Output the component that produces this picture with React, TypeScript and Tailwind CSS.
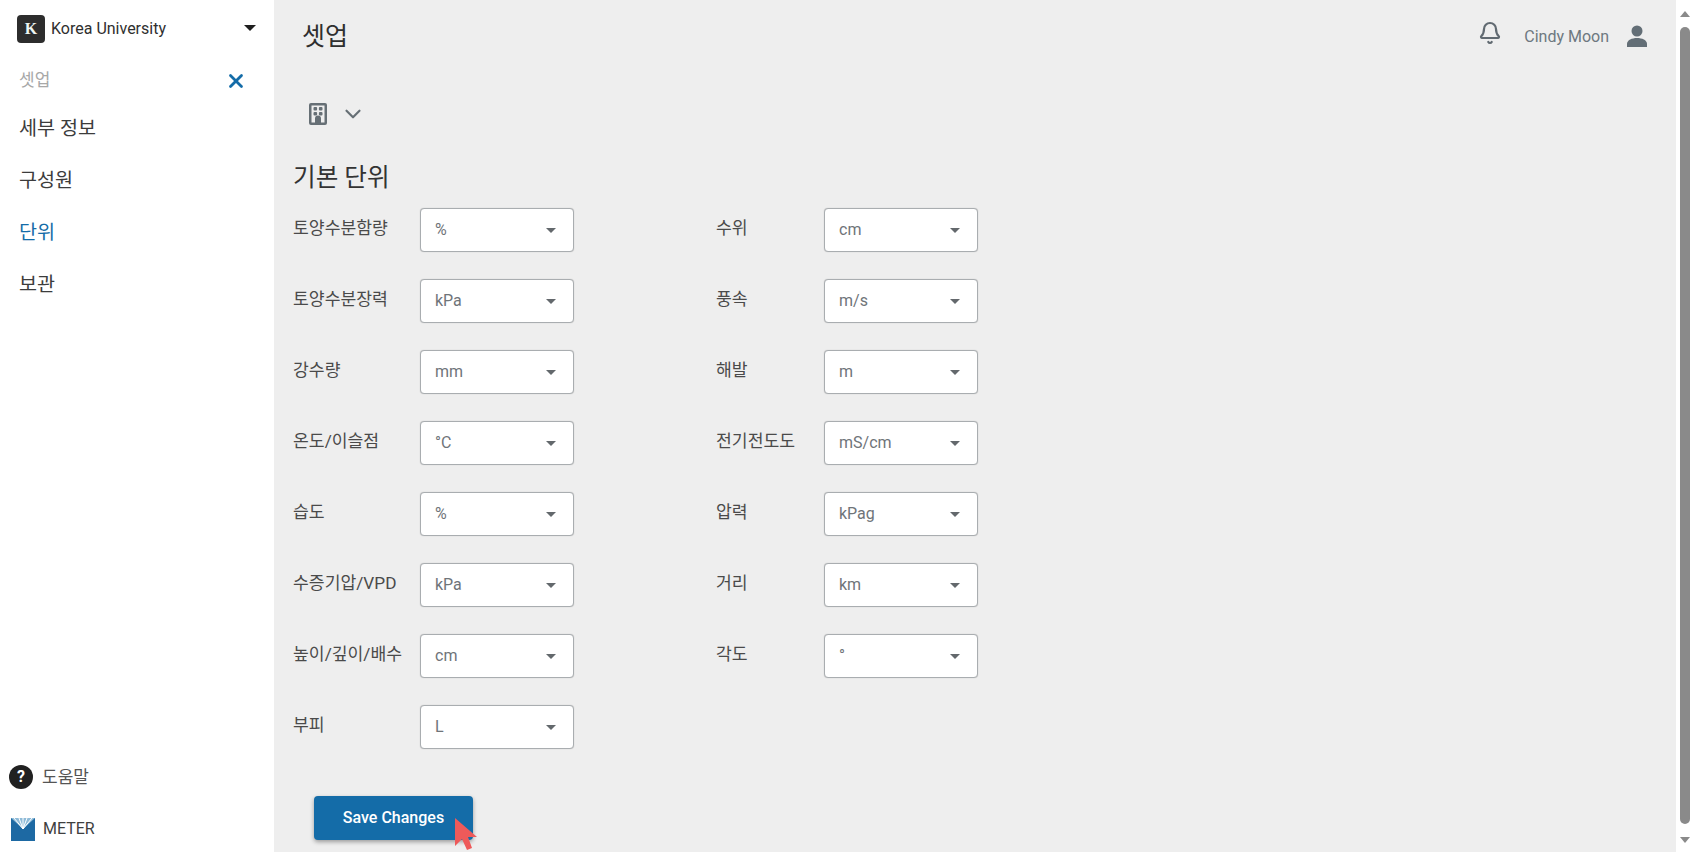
import React from "react";
import { Bell, ChevronDown, X } from "lucide-react";

const leftUnits = [
  { label: "토양수분함량", value: "%" },
  { label: "토양수분장력", value: "kPa" },
  { label: "강수량", value: "mm" },
  { label: "온도/이슬점", value: "°C" },
  { label: "습도", value: "%" },
  { label: "수증기압/VPD", value: "kPa" },
  { label: "높이/깊이/배수", value: "cm" },
  { label: "부피", value: "L" },
];

const rightUnits = [
  { label: "수위", value: "cm" },
  { label: "풍속", value: "m/s" },
  { label: "해발", value: "m" },
  { label: "전기전도도", value: "mS/cm" },
  { label: "압력", value: "kPag" },
  { label: "거리", value: "km" },
  { label: "각도", value: "°" },
];

function UnitRow({ label, value }: { label: string; value: string }) {
  return (
    <div className="flex h-[44px] items-center">
      <span className="w-[127px] pb-[3px] text-[17.2px] whitespace-nowrap text-[#4a4a4a]">{label}</span>
      <div className="flex h-[44px] w-[154px] items-center justify-between rounded-[4px] border border-[#a9adb0] bg-white pr-[17px] pl-[14px] shadow-[0_0_1px_rgba(0,0,0,0.25)]">
        <span className="text-[16px] text-[#6f7479]">{value}</span>
        <span className="h-0 w-0 border-x-[5.5px] border-t-[5.5px] border-x-transparent border-t-[#63686c]" />
      </div>
    </div>
  );
}

function NavItem({ children, active }: { children: React.ReactNode; active?: boolean }) {
  return (
    <a className={active ? "block h-[52px] text-[19.6px] leading-[52px] text-[#146ca8]" : "block h-[52px] text-[19.6px] leading-[52px] text-[#3c3c3c]"}>
      {children}
    </a>
  );
}

export default function App() {
  return (
    <div className="flex h-screen overflow-hidden bg-[#eeeeee] font-['Roboto','Noto_Sans_CJK_KR',sans-serif]">
      {/* sidebar */}
      <aside className="flex w-[274px] shrink-0 flex-col bg-white">
        <div className="flex items-center pt-[15px] pl-[17px]">
          <span className="flex h-[28px] w-[28px] items-center justify-center rounded-[4px] bg-[#2d2d2d] font-['Liberation_Serif',serif] text-[16px] font-bold text-[#eef5f2]">
            K
          </span>
          <span className="ml-[6px] text-[16px] text-[#2f2f2f]">Korea University</span>
          <span className="mb-[2px] ml-[78px] h-0 w-0 border-x-[6px] border-t-[6px] border-x-transparent border-t-[#1e1e1e]" />
        </div>

        <div className="mt-[25px] flex items-center justify-between pr-[27px] pl-[19px]">
          <span className="text-[17px] text-[#a8a8a8]">셋업</span>
          <X className="h-[22px] w-[22px] text-[#146ca8]" strokeWidth={3} />
        </div>

        <nav className="mt-[9px] pl-[19px]">
          <NavItem>세부 정보</NavItem>
          <NavItem>구성원</NavItem>
          <NavItem active>단위</NavItem>
          <NavItem>보관</NavItem>
        </nav>

        <div className="mt-auto pb-[11px] pl-[9px]">
          <div className="flex items-center">
            <span className="flex h-[24px] w-[24px] items-center justify-center rounded-full bg-[#212121] text-[16px] font-bold text-white">
              ?
            </span>
            <span className="ml-[9px] text-[17px] text-[#555555]">도움말</span>
          </div>
          <div className="mt-[27px] flex items-center pl-[2px]">
            <svg width="24" height="23" viewBox="0 0 24 23" className="shrink-0">
              <rect width="24" height="23" fill="#1d69a3" />
              <path d="M0 0 L12 11 L24 0 Z" fill="#8fbbd8" />
              <path d="M3 0 L12 11 L21 0 M8 0 L12 11 L16 0 M12 0 V11" stroke="#ffffff" strokeWidth="1" fill="none" />
            </svg>
            <span className="ml-[8px] text-[16px] text-[#3f3f3f]">METER</span>
          </div>
        </div>
      </aside>

      {/* main */}
      <main className="flex min-w-0 flex-1 flex-col pl-[19px]">
        <header className="flex items-center justify-between pt-[18px] pr-[27px]">
          <h1 className="pl-[9px] text-[25px] font-normal text-[#2f2f2f]">셋업</h1>
          <div className="flex items-center">
            <Bell className="mb-[7px] h-[24px] w-[24px] text-[#616a71]" strokeWidth={2.2} />
            <span className="ml-[22px] text-[16px] text-[#6d7880]">Cindy Moon</span>
            <svg width="24" height="24" viewBox="0 0 24 24" className="mb-[2px] ml-[16px]" fill="#636e76">
              <circle cx="12" cy="7" r="5.5" />
              <path d="M2 23 v-3 c0-4 5-6 10-6 s10 2 10 6 v3 Z" />
            </svg>
          </div>
        </header>

        <div className="mt-[45px] flex items-center pl-[15px]">
          <svg width="20" height="24" viewBox="0 0 20 24" fill="#666f75">
            <path
              fillRule="evenodd"
              d="M3 1 h14 a2 2 0 0 1 2 2 v18 a2 2 0 0 1 -2 2 h-14 a2 2 0 0 1 -2 -2 v-18 a2 2 0 0 1 2 -2 Z M3.5 3.5 v17 h3.5 v-4 a3 3 0 0 1 6 0 v4 h3.5 v-17 Z"
            />
            <rect x="5.5" y="5" width="3.6" height="3.6" rx="1" />
            <rect x="10.9" y="5" width="3.6" height="3.6" rx="1" />
            <rect x="5.5" y="10" width="3.6" height="3.6" rx="1" />
            <rect x="10.9" y="10" width="3.6" height="3.6" rx="1" />
          </svg>
          <ChevronDown className="ml-[12px] h-[26px] w-[26px] text-[#666f75]" strokeWidth={2} />
        </div>

        <h2 className="mt-[33px] text-[24.6px] font-normal text-[#333333]">기본 단위</h2>

        <div className="mt-[12px] flex">
          <div className="flex w-[423px] flex-col gap-[27px]">
            {leftUnits.map((u) => (
              <UnitRow key={u.label} label={u.label} value={u.value} />
            ))}
          </div>
          <div className="flex flex-col gap-[27px]">
            {rightUnits.map((u) => (
              <div key={u.label} className="[&>div>span:first-child]:w-[108px]">
                <UnitRow label={u.label} value={u.value} />
              </div>
            ))}
          </div>
        </div>

        <div className="mt-[47px] pl-[21px]">
          <button className="relative h-[44px] w-[159px] rounded-[4px] bg-[#146ca8] text-[16px] font-medium text-white shadow-[0_2px_4px_rgba(0,0,0,0.35)]">
            Save Changes
            <svg width="24" height="34" viewBox="0 0 24 34" className="absolute top-[22px] left-[140px]">
              <path d="M1 0 L1 28 L8 21 L13 32 L18 30 L14 19 L23 19 Z" fill="#ee5a5a" />
            </svg>
          </button>
        </div>
      </main>

      {/* scrollbar */}
      <div className="flex w-[17px] shrink-0 flex-col items-center bg-white pt-[11px] pb-[9px]">
        <span className="h-0 w-0 border-x-[5.5px] border-b-[6px] border-x-transparent border-b-[#8a8a8a]" />
        <div className="mt-[10px] w-[10px] flex-1 rounded-full bg-[#8a8a8a]" />
        <span className="mt-[13px] h-0 w-0 border-x-[5.5px] border-t-[6px] border-x-transparent border-t-[#8a8a8a]" />
      </div>
    </div>
  );
}
